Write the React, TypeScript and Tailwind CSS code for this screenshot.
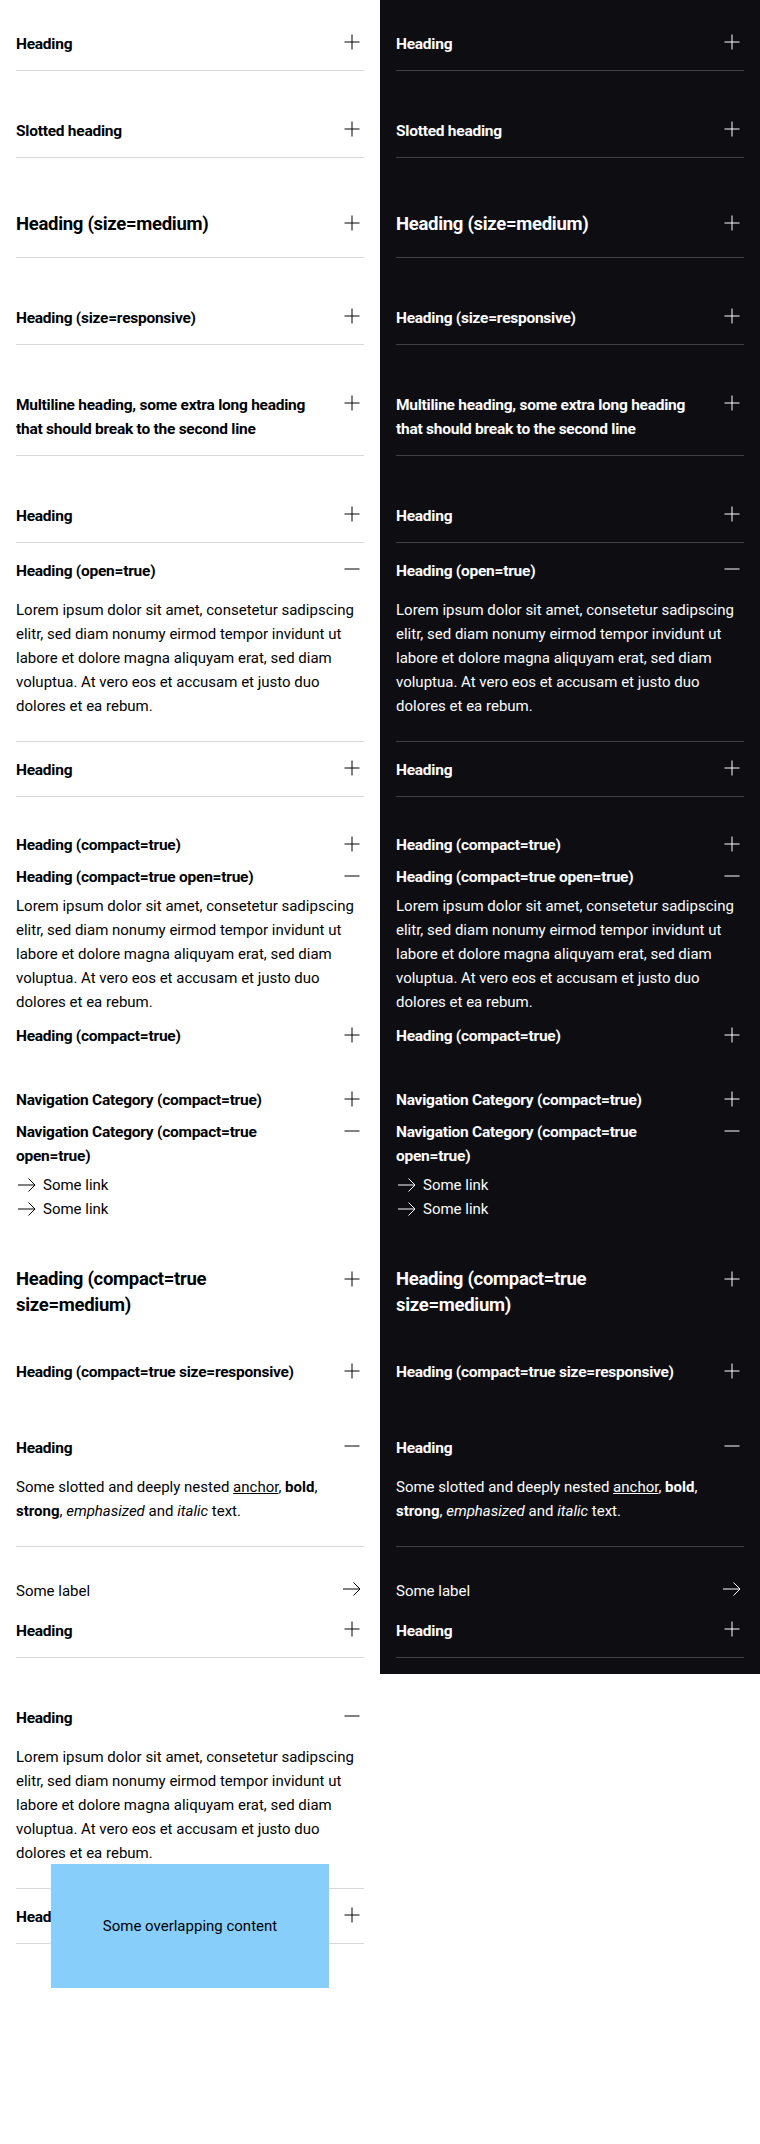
import React from 'react';

type Theme = 'light' | 'dark';

const HEADING_FONT = "font-['Roboto',sans-serif]";

function PlusIcon() {
  return (
    <svg width="24" height="24" viewBox="0 0 24 24" fill="none" stroke="currentColor" strokeWidth={1}>
      <path d="M12 4.5v15M4.5 12h15" />
    </svg>
  );
}

function MinusIcon() {
  return (
    <svg width="24" height="24" viewBox="0 0 24 24" fill="none" stroke="currentColor" strokeWidth={1}>
      <path d="M4.5 12h15" />
    </svg>
  );
}

function ArrowIcon() {
  return (
    <svg width="24" height="24" viewBox="0 0 24 24" fill="none" stroke="currentColor" strokeWidth={1}>
      <path d="M3 12h17M13.5 5.5 20 12l-6.5 6.5" />
    </svg>
  );
}

type AccProps = {
  theme: Theme;
  heading: React.ReactNode;
  medium?: boolean;
  compact?: boolean;
  open?: boolean;
  children?: React.ReactNode;
};

function Accordion({ theme, heading, medium = false, compact = false, open = false, children }: AccProps) {
  const dark = theme === 'dark';
  let btn: string;
  let iconOff: string;
  if (medium && compact) {
    btn = 'pt-[7px] pb-[6px] text-[18.5px] leading-[26px] tracking-[-0.3px]';
    iconOff = 'mt-px';
  } else if (medium) {
    btn = 'pt-[21px] pb-[20px] text-[18.5px] leading-[26px] tracking-[-0.3px]';
    iconOff = 'mt-0';
  } else if (compact) {
    btn = 'py-1 text-[15.5px] leading-6 tracking-[-0.25px]';
    iconOff = 'mt-[-1px]';
  } else {
    btn = 'pt-4 pb-[14px] text-[15.5px] leading-6 tracking-[-0.25px]';
    iconOff = 'mt-[-2px]';
  }
  const border = compact ? '' : dark ? 'border-b border-[#404044]' : 'border-b border-[#d8d8db]';
  return (
    <div className={border}>
      <div className={`flex items-start gap-6 ${btn}`}>
        <div className={`min-w-0 flex-1 font-bold ${HEADING_FONT}`}>{heading}</div>
        <div className={`h-6 w-6 shrink-0 tracking-normal ${iconOff}`}>{open ? <MinusIcon /> : <PlusIcon />}</div>
      </div>
      {open && <div className={compact ? 'pt-px pb-1.5' : 'pt-px pb-[23px]'}>{children}</div>}
    </div>
  );
}

const LOREM = (
  <p>
    Lorem ipsum dolor sit amet, consetetur sadipscing elitr, sed diam nonumy eirmod tempor invidunt ut labore et
    dolore magna aliquyam erat, sed diam voluptua. At vero eos et accusam et justo duo dolores et ea rebum.
  </p>
);

function LinkRow({ label }: { label: string }) {
  return (
    <a className="flex items-center gap-1">
      <span className="-ml-px h-6 w-6 shrink-0">
        <ArrowIcon />
      </span>
      <span>{label}</span>
    </a>
  );
}

function Column({ theme }: { theme: Theme }) {
  const dark = theme === 'dark';
  return (
    <div
      className={
        dark
          ? 'flex flex-col gap-8 bg-[#0e0e12] p-4 text-[#fbfcff]'
          : 'flex flex-col gap-8 bg-white p-4 text-[#010205]'
      }
    >
      <div>
        <Accordion theme={theme} heading="Heading" />
      </div>
      <div>
        <Accordion theme={theme} heading={<span>Slotted heading</span>} />
      </div>
      <div>
        <Accordion theme={theme} medium heading="Heading (size=medium)" />
      </div>
      <div>
        <Accordion theme={theme} heading="Heading (size=responsive)" />
      </div>
      <div>
        <Accordion theme={theme} heading="Multiline heading, some extra long heading that should break to the second line" />
      </div>
      <div>
        <Accordion theme={theme} heading="Heading" />
        <Accordion theme={theme} heading="Heading (open=true)" open>
          {LOREM}
        </Accordion>
        <Accordion theme={theme} heading="Heading" />
      </div>
      <div>
        <Accordion theme={theme} compact heading="Heading (compact=true)" />
        <Accordion theme={theme} compact open heading="Heading (compact=true open=true)">
          {LOREM}
        </Accordion>
        <Accordion theme={theme} compact heading="Heading (compact=true)" />
      </div>
      <div>
        <Accordion theme={theme} compact heading="Navigation Category (compact=true)" />
        <Accordion theme={theme} compact open heading="Navigation Category (compact=true open=true)">
          <div className="flex flex-col">
            <LinkRow label="Some link" />
            <LinkRow label="Some link" />
          </div>
        </Accordion>
      </div>
      <div>
        <Accordion theme={theme} compact medium heading="Heading (compact=true size=medium)" />
      </div>
      <div>
        <Accordion theme={theme} compact heading="Heading (compact=true size=responsive)" />
      </div>
      <div>
        <Accordion theme={theme} open heading="Heading">
          <p>
            Some slotted and deeply nested <a className="underline">anchor</a>, <b>bold</b>, <strong>strong</strong>,{' '}
            <em>emphasized</em> and <i>italic</i> text.
          </p>
        </Accordion>
      </div>
      <div>
        <div className="flex items-start justify-between gap-3">
          <span>Some label</span>
          <span className="mt-[-2px] h-6 w-6 shrink-0">
            <ArrowIcon />
          </span>
        </div>
        <Accordion theme={theme} heading="Heading" />
      </div>
    </div>
  );
}

export default function App() {
  return (
    <div className="min-h-[2144px] w-full bg-white font-['Roboto',sans-serif] text-[15px] leading-6">
      <div className="grid grid-cols-2">
        <Column theme="light" />
        <Column theme="dark" />
      </div>
      <div className="w-1/2 p-4 text-[#010205]">
        <div className="relative">
          <Accordion theme="light" open heading="Heading">
            {LOREM}
          </Accordion>
          <Accordion theme="light" heading="Heading" />
          <div className="absolute top-[174px] left-[10%] flex h-[124px] w-[80%] items-center justify-center bg-[#87cefa] text-[#010205]">
            Some overlapping content
          </div>
        </div>
      </div>
    </div>
  );
}
